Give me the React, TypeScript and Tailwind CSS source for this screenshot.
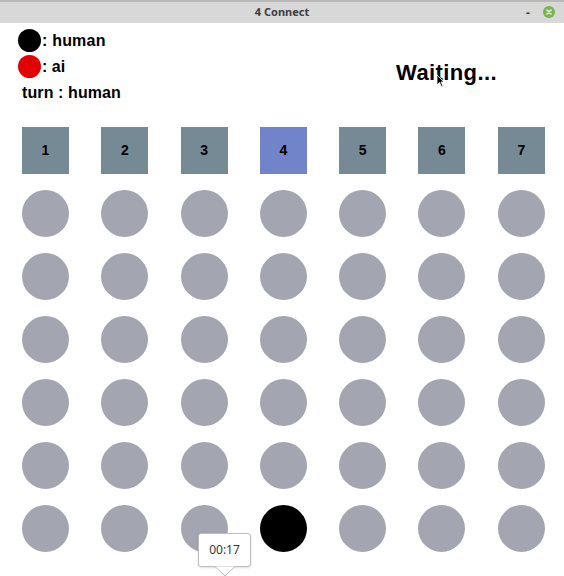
import React from "react"

const COLS = [1, 2, 3, 4, 5, 6, 7]
const ROWS = 6

export default function App() {
  return (
    <div className="relative w-[564px] h-[576px] overflow-hidden bg-white font-['Liberation_Sans',Arial,sans-serif]">
      {/* Title bar */}
      <div className="relative h-[23px] bg-[#d8d8d8] border-t-[2px] border-[#b9b9b9] flex items-center justify-center">
        <span className="text-[11px] font-bold text-[#3d3d3d] font-['Noto_Sans',sans-serif]">4 Connect</span>
        <span className="absolute right-[34px] top-[1px] text-[13px] font-bold text-[#444]">-</span>
        <span className="absolute right-[9px] top-[4px] w-[12px] h-[12px] rounded-full bg-[#78b552] flex items-center justify-center">
          <svg width="6" height="6" viewBox="0 0 6 6">
            <path d="M1 1L5 5M5 1L1 5" stroke="white" strokeWidth="1.5" strokeLinecap="round" />
          </svg>
        </span>
      </div>

      {/* Header */}
      <div className="flex items-start h-[104px]">
        <div className="flex flex-col pl-[18px] pt-[6px] text-[16px] font-bold text-black">
          <div className="flex items-center h-[23px]">
            <span className="w-[23px] h-[23px] rounded-full bg-black" />
            <span className="ml-[1px] leading-none tracking-[0.2px]">: human</span>
          </div>
          <div className="flex items-center h-[23px] mt-[3px]">
            <span className="w-[23px] h-[23px] rounded-full bg-[#e30000]" />
            <span className="ml-[1px] leading-none">: ai</span>
          </div>
          <div className="ml-[4px] mt-[6px] leading-[18px] tracking-[0.1px]">turn : human</div>
        </div>
        <div className="ml-auto mr-[67px] mt-[36px] text-[22px] leading-[27px] font-bold tracking-[0.4px] text-black">Waiting...</div>
      </div>

      {/* Board */}
      <div className="pl-[22px] grid grid-cols-[repeat(7,47px)] gap-x-[32.3px] gap-y-[16px]">
        {COLS.map((c) => (
          <button
            key={c}
            className={`w-[47px] h-[47px] flex items-center justify-center text-[14px] font-bold text-black ${
              c === 4 ? "bg-[#7183c9]" : "bg-[#758a94]"
            }`}
          >
            {c}
          </button>
        ))}
        {Array.from({ length: ROWS }).map((_, r) =>
          COLS.map((c) => (
            <div
              key={`${r}-${c}`}
              className={`w-[47px] h-[47px] rounded-full ${r === ROWS - 1 && c === 4 ? "bg-black" : "bg-[#a3a5b1]"}`}
            />
          ))
        )}
      </div>

      {/* Mouse cursor */}
      <svg className="absolute left-[436px] top-[74px]" width="9" height="14" viewBox="0 0 9 14">
        <path d="M1 1L1 11L3.5 8.5L5.5 13L7 12.3L5 8L8 8Z" fill="black" stroke="white" strokeWidth="0.8" />
      </svg>

      {/* Tooltip */}
      <div className="absolute left-[198px] top-[533px] w-[53px] h-[34px] bg-white border border-[#bdbdbd] rounded-[3px] flex items-center justify-center shadow-sm">
        <span className="text-[12px] text-[#2e3846] font-['Noto_Sans',sans-serif]">00:17</span>
      </div>
      <svg className="absolute left-[215px] top-[566px]" width="20" height="11" viewBox="0 0 20 11">
        <path d="M0 0.5L10 10L20 0.5" fill="white" stroke="#bdbdbd" strokeWidth="1" />
      </svg>
    </div>
  )
}
